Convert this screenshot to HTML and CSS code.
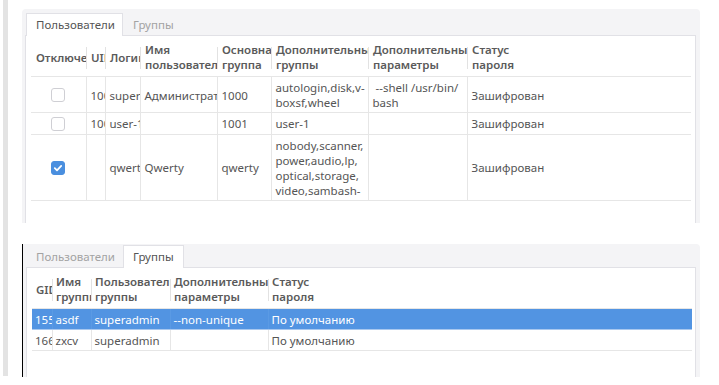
FILE: index.html
```html
<!DOCTYPE html>
<html lang="ru">
<head>
<meta charset="utf-8">
<link rel="stylesheet" href="styles.css">
</head>
<body>
<div class="page">
  <div class="side-bar"></div>
  <div class="main">
    <section class="panel panel-users">
      <div class="tabs">
        <div class="tab active">Пользователи</div>
        <div class="tab">Группы</div>
      </div>
      <div class="content">
        <table class="grid users">
          <colgroup>
            <col style="width:55px"><col style="width:19px"><col style="width:35px"><col style="width:77px">
            <col style="width:54px"><col style="width:97px"><col style="width:99px"><col style="width:224px">
          </colgroup>
          <thead>
            <tr>
              <th><span class="h1">Отключено</span></th>
              <th><span class="h1">UID</span></th>
              <th><span class="h1">Логин</span></th>
              <th>Имя<br>пользователя</th>
              <th>Основная<br>группа</th>
              <th>Дополнительные<br>группы</th>
              <th>Дополнительные<br>параметры</th>
              <th>Статус<br>пароля</th>
            </tr>
          </thead>
          <tbody>
            <tr>
              <td class="c"><span class="cb"></span></td>
              <td class="nw">1000</td>
              <td class="nw">superadmin</td>
              <td class="nw">Администратор</td>
              <td>1000</td>
              <td>autologin,disk,v-<br>boxsf,wheel</td>
              <td>&nbsp;--shell /usr/bin/<br>bash</td>
              <td>Зашифрован</td>
            </tr>
            <tr>
              <td class="c"><span class="cb"></span></td>
              <td class="nw">1001</td>
              <td class="nw">user-1</td>
              <td></td>
              <td>1001</td>
              <td>user-1</td>
              <td></td>
              <td>Зашифрован</td>
            </tr>
            <tr>
              <td class="c"><span class="cb on"><svg viewBox="0 0 14 14" width="14" height="14"><path d="M3.8 7.2 L6 9.3 L10.2 4.9" fill="none" stroke="#fff" stroke-width="1.8" stroke-linecap="round" stroke-linejoin="round"/></svg></span></td>
              <td></td>
              <td class="nw">qwerty</td>
              <td>Qwerty</td>
              <td>qwerty</td>
              <td>nobody,scanner,<br>power,audio,lp,<br>optical,storage,<br>video,sambash-</td>
              <td></td>
              <td>Зашифрован</td>
            </tr>
          </tbody>
        </table>
      </div>
    </section>

    <section class="panel panel-groups">
      <div class="tabs">
        <div class="tab">Пользователи</div>
        <div class="tab active">Группы</div>
      </div>
      <div class="content">
        <table class="grid groups">
          <colgroup>
            <col style="width:20px"><col style="width:39px"><col style="width:79px"><col style="width:98px"><col style="width:424px">
          </colgroup>
          <thead>
            <tr>
              <th><span class="h1">GID</span></th>
              <th>Имя<br>группы</th>
              <th>Пользователи<br>группы</th>
              <th>Дополнительные<br>параметры</th>
              <th>Статус<br>пароля</th>
            </tr>
          </thead>
          <tbody>
            <tr class="sel">
              <td class="nw">1555</td>
              <td class="nw">asdf</td>
              <td class="nw">superadmin</td>
              <td class="nw">--non-unique</td>
              <td class="nw">По умолчанию</td>
            </tr>
            <tr>
              <td class="nw">1666</td>
              <td class="nw">zxcv</td>
              <td class="nw">superadmin</td>
              <td></td>
              <td class="nw">По умолчанию</td>
            </tr>
          </tbody>
        </table>
      </div>
    </section>
  </div>
</div>
</body>
</html>
```

FILE: styles.css
```css
* { box-sizing: border-box; }
html, body {
  margin: 0;
  padding: 0;
  background: #ffffff;
}
body {
  font-family: "Noto Sans", "Open Sans", sans-serif;
  font-size: 11.5px;
  color: #555555;
  width: 719px;
  height: 385px;
  overflow: hidden;
}
.page {
  display: flex;
  align-items: flex-start;
}
.side-bar {
  margin-left: 3px;
  width: 5px;
  height: 376px;
  background: #e3e3e3;
  flex: none;
}
.main {
  margin-left: 14px;
  width: 678px;
  display: flex;
  flex-direction: column;
}
.panel {
  background: #f4f4f6;
  border-radius: 4px 4px 0 0;
  display: flex;
  flex-direction: column;
  overflow: hidden;
}
.panel-users {
  margin-top: 9px;
  height: 214px;
  padding-top: 4px;
}
.panel-groups {
  margin-top: 21px;
  height: 133px;
  padding-top: 1px;
  border-left: 1px solid #000000;
  border-radius: 0 4px 0 0;
}
.tabs {
  display: flex;
  height: 22px;
  padding-left: 4px;
  position: relative;
  z-index: 1;
}
.panel-groups .tabs { padding-left: 3px; }
.tab {
  height: 22px;
  line-height: 21px;
  padding: 0 7px 0 9px;
  color: #a3a3a3;
  border: 1px solid transparent;
  border-bottom: none;
}
.panel-groups .tab.active { padding: 0 9px 0 9px; }
.tab.active {
  background: #ffffff;
  color: #555555;
  border-color: #e1e1e6;
  height: 23px;
}
.content {
  flex: 1;
  margin: 0 4px 0 3px;
  background: #ffffff;
  border: 1px solid #e1e1e6;
  border-bottom: none;
  padding: 0 4px 0 5px;
}
.grid {
  table-layout: fixed;
  border-collapse: collapse;
  width: 660px;
}
.grid th {
  font-weight: 600;
  color: #5a5a5a;
  text-align: left;
  vertical-align: middle;
  line-height: 15px;
  padding: 6px 2px 4px 5px;
  height: 40px;
  overflow: hidden;
  white-space: nowrap;
  position: relative;
  border-bottom: 1px solid #e6e6e6;
}
.grid th + th::before {
  content: "";
  position: absolute;
  left: 0;
  top: 11px;
  height: 22px;
  border-left: 1px solid #e2e2e2;
}
.grid td {
  line-height: 15px;
  padding: 3px 2px 2px 4px;
  vertical-align: middle;
  overflow: hidden;
  border-bottom: 1px solid #e6e6e6;
  border-left: 1px solid #e6e6e6;
}
.grid td:first-child { border-left: none; }
.grid td.nw { white-space: nowrap; text-overflow: clip; }
.grid td.c { text-align: center; padding-left: 0; padding-right: 0; }
.cb {
  display: inline-block;
  width: 14px;
  height: 14px;
  border: 1px solid #cfcfd4;
  border-radius: 3px;
  background: #ffffff;
  vertical-align: middle;
  position: relative;
  top: -1px;
}
.cb.on {
  background: #4a8fdf;
  border-color: #4a8fdf;
}
.cb svg {
  display: block;
  margin: -1px;
}
.groups td { padding-left: 3px; }
.groups th { padding-left: 4px; }
.sel td {
  background: #5294e2;
  color: #ffffff;
  border-left-color: #5a9ae4;
  border-bottom-color: #a9c8ef;
}
```
